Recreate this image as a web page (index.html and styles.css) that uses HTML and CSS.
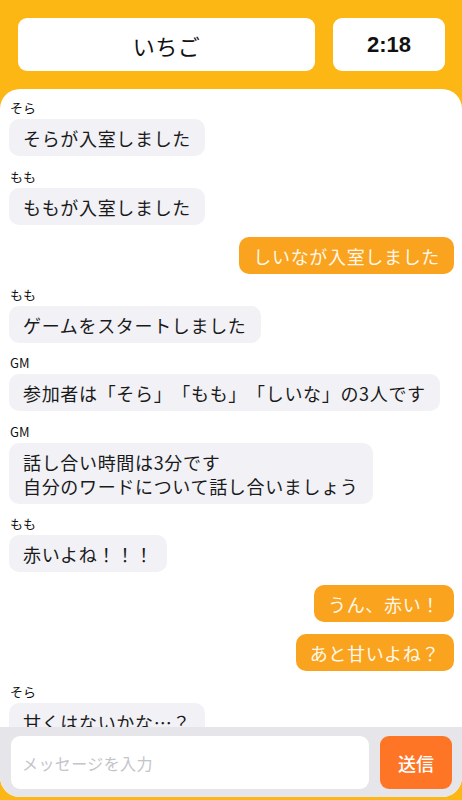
FILE: index.html
```html
<!DOCTYPE html>
<html lang="ja">
<head>
<meta charset="utf-8">
<title>いちご</title>
<link rel="stylesheet" href="styles.css">
</head>
<body>
<div class="app">
  <header class="topbar">
    <div class="word-box">いちご</div>
    <div class="timer-box">2:18</div>
  </header>
  <main class="panel">
    <div class="messages">
      <div class="msg left">
        <div class="name">そら</div>
        <div class="bubble">そらが入室しました</div>
      </div>
      <div class="msg left">
        <div class="name">もも</div>
        <div class="bubble">ももが入室しました</div>
      </div>
      <div class="msg right">
        <div class="bubble mine">しいなが入室しました</div>
      </div>
      <div class="msg left">
        <div class="name">もも</div>
        <div class="bubble">ゲームをスタートしました</div>
      </div>
      <div class="msg left">
        <div class="name">GM</div>
        <div class="bubble">参加者は「そら」「もも」「しいな」の3人です</div>
      </div>
      <div class="msg left">
        <div class="name">GM</div>
        <div class="bubble">話し合い時間は3分です<br>自分のワードについて話し合いましょう</div>
      </div>
      <div class="msg left">
        <div class="name">もも</div>
        <div class="bubble">赤いよね！！！</div>
      </div>
      <div class="msg right">
        <div class="bubble mine">うん、赤い！</div>
      </div>
      <div class="msg right">
        <div class="bubble mine">あと甘いよね？</div>
      </div>
      <div class="msg left">
        <div class="name">そら</div>
        <div class="bubble">甘くはないかな…？</div>
      </div>
    </div>
    <form class="composer">
      <input class="input" type="text" placeholder="メッセージを入力">
      <button class="send" type="button">送信</button>
    </form>
  </main>
</div>
</body>
</html>
```

FILE: styles.css
```css
* { box-sizing: border-box; }

html, body {
  margin: 0;
  padding: 0;
}

body {
  background: #fdb714;
  font-family: "Noto Sans CJK JP", "Noto Sans", sans-serif;
  color: #111;
  text-spacing-trim: space-all;
}

.app {
  height: 800px;
  display: flex;
  flex-direction: column;
}

.topbar {
  display: flex;
  gap: 18px;
  padding: 18px 17px 18px 18px;
}

.word-box,
.timer-box {
  height: 53px;
  background: #fff;
  border-radius: 9px;
  display: flex;
  align-items: center;
  justify-content: center;
}

.word-box {
  flex: 1;
  font-size: 22px;
  font-weight: 400;
  letter-spacing: 0.5px;
}

.timer-box {
  width: 112px;
  font-family: "Liberation Sans", "Noto Sans", sans-serif;
  font-size: 22px;
  font-weight: 700;
}

.panel {
  height: 708px;
  background: #fff;
  border-radius: 20px;
  display: flex;
  flex-direction: column;
  overflow: hidden;
}

.messages {
  flex: 1;
  overflow: hidden;
  padding: 11px 8px 0 9px;
  display: flex;
  flex-direction: column;
  gap: 12.5px;
}

.msg {
  display: flex;
  flex-direction: column;
  align-items: flex-start;
}

.msg.right {
  align-items: flex-end;
}

.name {
  font-size: 13px;
  line-height: 16px;
  margin: 0 0 3px 1px;
  color: #111;
}

.bubble {
  background: #f1f1f6;
  border-radius: 10px;
  padding: 7px 14px 6px;
  font-size: 18px;
  line-height: 24px;
  letter-spacing: 0.67px;
  color: #1a1a1a;
  white-space: nowrap;
}

.bubble.mine {
  background: #f9a31e;
  color: #fff8ea;
}

.composer {
  height: 70px;
  margin: 0;
  background: #e5e5ea;
  display: flex;
  gap: 11px;
  padding: 9px 10px 8px 11px;
}

.input {
  flex: 1;
  height: 53px;
  border: none;
  border-radius: 9px;
  background: #fff;
  padding: 0 11px;
  font-family: "Noto Sans CJK JP", "Noto Sans", sans-serif;
  font-size: 16px;
  letter-spacing: 0.4px;
  outline: none;
}

.input::placeholder {
  color: #c4c4c9;
}

.send {
  width: 72px;
  height: 53px;
  border: none;
  border-radius: 9px;
  background: #fe7526;
  color: #fff;
  font-family: "Noto Sans CJK JP", "Noto Sans", sans-serif;
  font-size: 18px;
  font-weight: 500;
  padding: 0;
}
```
